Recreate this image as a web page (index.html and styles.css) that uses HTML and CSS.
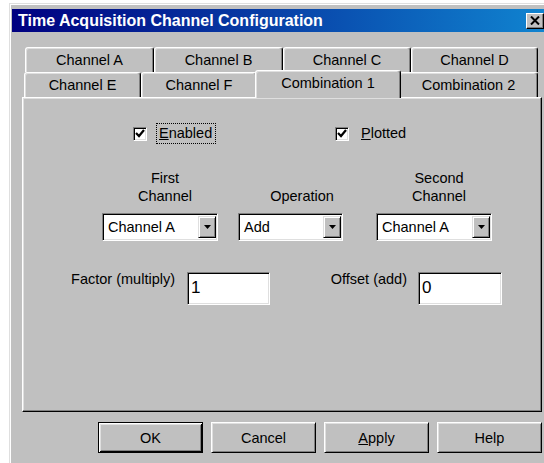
FILE: index.html
```html
<!DOCTYPE html>
<html lang="en">
<head>
  <meta charset="UTF-8">
  <title>Time Acquisition Channel Configuration</title>
  <link rel="stylesheet" href="styles.css">
</head>
<body>

  <div class="window">
    <div class="titlebar">
      <span class="title">Time Acquisition Channel Configuration</span>
      <span class="close-btn">
        <svg width="10" height="9" viewBox="0 0 10 9"><path d="M1 0.5 L9 8.5 M9 0.5 L1 8.5" stroke="#000" stroke-width="2"/></svg>
      </span>
    </div>

    <div class="tabctl">
      <div class="tab-row row-back">
        <div class="tab w-a">Channel A</div>
        <div class="tab w-b">Channel B</div>
        <div class="tab w-c">Channel C</div>
        <div class="tab w-d">Channel D</div>
      </div>
      <div class="tab-row row-front">
        <div class="tab w-e">Channel E</div>
        <div class="tab w-f">Channel F</div>
        <div class="tab w-g selected">Combination 1</div>
        <div class="tab w-h">Combination 2</div>
      </div>

      <div class="panel">
        <!-- checkboxes -->
        <div class="check-row">
          <div class="check-item first">
            <span class="checkbox"><svg width="10" height="9" viewBox="0 0 10 9"><path d="M1 4 L4 7 L9 1" stroke="#000" stroke-width="2.2" fill="none"/></svg></span>
            <span class="check-label focused"><u>E</u>nabled</span>
          </div>
          <div class="check-item">
            <span class="checkbox"><svg width="10" height="9" viewBox="0 0 10 9"><path d="M1 4 L4 7 L9 1" stroke="#000" stroke-width="2.2" fill="none"/></svg></span>
            <span class="check-label"><u>P</u>lotted</span>
          </div>
        </div>

        <!-- channel selectors -->
        <div class="combo-row">
          <div class="combo-col col-1">
            <div class="combo-label">First<br>Channel</div>
            <div class="combo">
              <span class="combo-text">Channel A</span>
              <span class="combo-btn"><svg width="7" height="4" viewBox="0 0 7 4"><path d="M0 0 H7 L3.5 4 Z" fill="#000"/></svg></span>
            </div>
          </div>
          <div class="combo-col col-2">
            <div class="combo-label">Operation</div>
            <div class="combo">
              <span class="combo-text">Add</span>
              <span class="combo-btn"><svg width="7" height="4" viewBox="0 0 7 4"><path d="M0 0 H7 L3.5 4 Z" fill="#000"/></svg></span>
            </div>
          </div>
          <div class="combo-col col-3">
            <div class="combo-label">Second<br>Channel</div>
            <div class="combo">
              <span class="combo-text">Channel A</span>
              <span class="combo-btn"><svg width="7" height="4" viewBox="0 0 7 4"><path d="M0 0 H7 L3.5 4 Z" fill="#000"/></svg></span>
            </div>
          </div>
        </div>

        <!-- factor / offset -->
        <div class="field-row">
          <label class="field-label lbl-factor">Factor (multiply)</label>
          <div class="field field-factor">1</div>
          <label class="field-label lbl-offset">Offset (add)</label>
          <div class="field field-offset">0</div>
        </div>
      </div>
    </div>

    <div class="button-row">
      <div class="btn default">OK</div>
      <div class="btn">Cancel</div>
      <div class="btn"><u>A</u>pply</div>
      <div class="btn">Help</div>
    </div>
  </div>

</body>
</html>
```

FILE: styles.css
```css
body {
  margin: 0;
  background-color: #ffffff;
  overflow: hidden;
  font-family: "Liberation Sans", Arial, sans-serif;
  font-size: 14.5px;
  color: #000;
}

.window {
  box-sizing: border-box;
  width: 545px;
  height: 470px;
  margin: 3px 0 0 9px;
  padding: 5px 0 0 2px;
  background-color: #c0c0c0;
  border-top: 1px solid #dfdfdf;
  border-left: 1px solid #dfdfdf;
  box-shadow: inset 1px 1px #ffffff;
}

/* title bar */
.titlebar {
  display: flex;
  align-items: center;
  width: 534px;
  height: 23px;
  box-sizing: border-box;
  padding-left: 6px;
  background: linear-gradient(to right, #000080, #1084d0);
  color: #fff;
  font-weight: bold;
  font-size: 16px;
}

.close-btn {
  display: flex;
  align-items: center;
  justify-content: center;
  box-sizing: border-box;
  width: 18px;
  height: 16px;
  margin-left: auto;
  margin-right: 2px;
  background-color: #c0c0c0;
  border: 1px solid;
  border-color: #fff #000 #000 #fff;
  box-shadow: inset -1px -1px #808080;
}

/* tabs */
.tabctl {
  width: 520px;
  margin: 15px 0 0 10px;
}

.tab-row {
  display: flex;
  height: 25px;
}

.row-back {
  padding-left: 3px;
}

.row-front {
  padding-left: 2px;
  align-items: flex-end;
}

.tab {
  box-sizing: border-box;
  height: 25px;
  display: flex;
  align-items: center;
  justify-content: center;
  background-color: #c0c0c0;
  border: 1px solid;
  border-bottom: none;
  border-color: #fff #000 transparent #fff;
  border-radius: 3px 3px 0 0;
  box-shadow: inset -1px 0 #808080, inset 1px 1px #dfdfdf;
}

.w-a { width: 129px; }
.w-b { width: 129px; }
.w-c { width: 128px; }
.w-d { width: 127px; }
.w-e { width: 117px; }
.w-f { width: 116px; }
.w-g { width: 142px; }
.w-h { width: 139px; }

.tab.selected {
  position: relative;
  z-index: 1;
  width: 146px;
  height: 28px;
  margin: 0 -2px -1px -2px;
  padding-bottom: 3px;
}

.panel {
  box-sizing: border-box;
  height: 315px;
  border: 1px solid;
  border-color: #fff #000 #000 #fff;
  box-shadow: inset -1px -1px #808080, inset 1px 1px #dfdfdf;
  padding-top: 25px;
}

/* checkboxes */
.check-row {
  display: flex;
  align-items: center;
  height: 21px;
  padding-left: 110px;
}

.check-item {
  display: flex;
  align-items: center;
}

.check-item.first {
  width: 202px;
}

.checkbox {
  display: flex;
  align-items: center;
  justify-content: center;
  box-sizing: border-box;
  width: 14px;
  height: 14px;
  background-color: #fff;
  border: 1px solid;
  border-color: #808080 #fff #fff #808080;
  box-shadow: inset 1px 1px #000, inset -1px -1px #dfdfdf;
}

.check-label {
  box-sizing: border-box;
  height: 21px;
  line-height: 19px;
  margin-left: 9px;
  padding: 0 3px 0 2px;
  border: 1px dotted transparent;
}

.check-label.focused {
  border-color: #000;
}

/* combos */
.combo-row {
  display: flex;
  align-items: flex-end;
  margin-top: 25px;
}

.combo-col {
  display: flex;
  flex-direction: column;
}

.col-1 { width: 116px; margin-left: 79px; }
.col-2 { width: 105px; margin-left: 20px; }
.col-3 { width: 116px; margin-left: 33px; }

.combo-label {
  text-align: center;
  line-height: 18px;
}

.col-1 .combo-label { padding-left: 10px; }
.col-2 .combo-label { padding-left: 23px; }
.col-3 .combo-label { padding-left: 10px; }

.combo {
  display: flex;
  align-items: center;
  box-sizing: border-box;
  height: 28px;
  margin-top: 8px;
  padding-left: 5px;
  background-color: #fff;
  border: 1px solid;
  border-color: #808080 #fff #fff #808080;
  box-shadow: inset 1px 1px #000, inset -1px -1px #dfdfdf;
}

.combo-btn {
  display: flex;
  align-items: center;
  justify-content: center;
  box-sizing: border-box;
  width: 18px;
  height: 22px;
  margin-left: auto;
  margin-right: 1px;
  background-color: #c0c0c0;
  border: 1px solid;
  border-color: #dfdfdf #000 #000 #dfdfdf;
  box-shadow: inset 1px 1px #fff, inset -1px -1px #808080;
}

/* factor / offset */
.field-row {
  display: flex;
  align-items: flex-start;
  margin-top: 31px;
}

.field-label {
  text-align: right;
  line-height: 18px;
  margin-top: -2px;
}

.lbl-factor { width: 152px; margin-right: 12px; }
.lbl-offset { width: 137px; margin-right: 11px; }

.field {
  box-sizing: border-box;
  height: 33px;
  padding: 5px 0 0 3px;
  font-size: 17px;
  background-color: #fff;
  border: 1px solid;
  border-color: #808080 #fff #fff #808080;
  box-shadow: inset 1px 1px #000, inset -1px -1px #dfdfdf;
}

.field-factor { width: 83px; }
.field-offset { width: 84px; }

/* dialog buttons */
.button-row {
  display: flex;
  gap: 8px;
  margin: 10px 0 0 86px;
}

.btn {
  box-sizing: border-box;
  width: 105px;
  height: 31px;
  display: flex;
  align-items: center;
  justify-content: center;
  background-color: #c0c0c0;
  border: 1px solid;
  border-color: #fff #000 #000 #fff;
  box-shadow: inset 1px 1px #dfdfdf, inset -1px -1px #808080;
}

.btn.default {
  border-color: #000;
  box-shadow: inset 1px 1px #fff, inset -1px -1px #000, inset 2px 2px #dfdfdf, inset -2px -2px #808080;
}
```
